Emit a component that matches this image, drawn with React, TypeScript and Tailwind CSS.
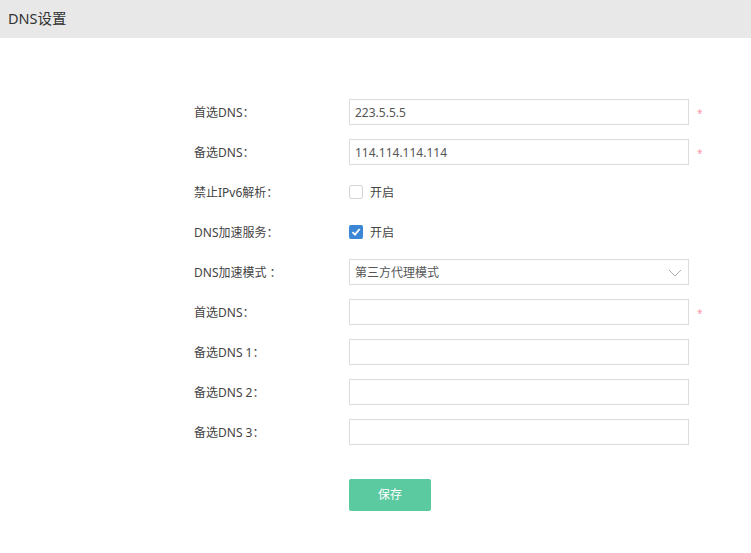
import React from "react";

const font = { fontFamily: '"Microsoft YaHei", "Noto Sans", "Noto Sans CJK SC", sans-serif' };

function Row({ label, children, req }: { label: string; children: React.ReactNode; req?: boolean }) {
  return (
    <div className="flex h-[26px] items-center">
      <div className="w-[155px] pt-[1px] text-[12px] text-[#444]">{label}</div>
      {children}
      {req && <span className="ml-[8px] mt-[2px] text-[10px] text-[#f59aa6]">*</span>}
    </div>
  );
}

function Input({ value }: { value?: string }) {
  return (
    <div className="flex h-[26px] w-[340px] items-center border border-[#dcdcdc] bg-white px-[5px] pt-[1px] text-[12px] text-[#555]">
      {value}
    </div>
  );
}

function Check({ checked }: { checked?: boolean }) {
  return (
    <div className="flex items-center">
      {checked ? (
        <div className="flex h-[14px] w-[14px] items-center justify-center rounded-[2px] bg-[#3a87d5]">
          <svg width="10" height="10" viewBox="0 0 10 10">
            <path d="M1.5 5.2 L4 7.6 L8.6 2" stroke="white" strokeWidth="1.8" fill="none" />
          </svg>
        </div>
      ) : (
        <div className="h-[14px] w-[14px] rounded-[2px] border border-[#d5d5d5] bg-white" />
      )}
      <span className="ml-[7px] pt-[1px] text-[12px] text-[#444]">开启</span>
    </div>
  );
}

export default function App() {
  return (
    <div className="h-[553px] w-[751px] bg-white" style={font}>
      <div className="flex h-[38px] items-center bg-[#e8e8e8] pl-[8px] text-[14.5px] text-[#333]">DNS设置</div>
      <div className="flex flex-col gap-[14px] pl-[194px] pt-[61px]">
        <Row label="首选DNS：" req>
          <Input value="223.5.5.5" />
        </Row>
        <Row label="备选DNS：" req>
          <Input value="114.114.114.114" />
        </Row>
        <Row label="禁止IPv6解析：">
          <Check />
        </Row>
        <Row label="DNS加速服务：">
          <Check checked />
        </Row>
        <Row label="DNS加速模式 ：">
          <div className="flex h-[26px] w-[340px] items-center justify-between border border-[#dcdcdc] bg-white px-[5px] pt-[1px] text-[12px] text-[#555]">
            <span>第三方代理模式</span>
            <svg width="14" height="8" viewBox="0 0 14 8" className="mr-[1px]">
              <path d="M1 1 L7 7 L13 1" stroke="#aaa" strokeWidth="1" fill="none" />
            </svg>
          </div>
        </Row>
        <Row label="首选DNS：" req>
          <Input />
        </Row>
        <Row label="备选DNS 1：">
          <Input />
        </Row>
        <Row label="备选DNS 2：">
          <Input />
        </Row>
        <Row label="备选DNS 3：">
          <Input />
        </Row>
        <div className="mt-[20px] pl-[155px]">
          <button className="h-[32px] w-[82px] rounded-[2px] bg-[#5ccaa0] text-[12px] text-white">保存</button>
        </div>
      </div>
    </div>
  );
}
